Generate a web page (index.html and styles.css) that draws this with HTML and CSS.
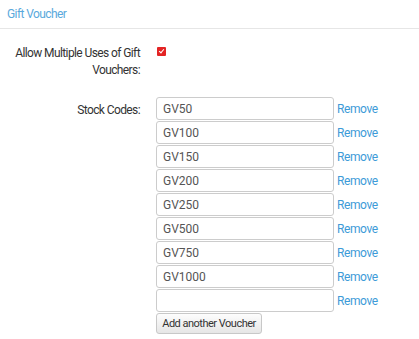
FILE: index.html
```html
<!DOCTYPE html>
<html lang="en">
  <head>
    <meta charset="UTF-8" />
    <title>Gift Voucher</title>
    <link rel="stylesheet" href="styles.css">
  </head>
  <body>
    <div class="panel-title">Gift Voucher</div>

    <form class="settings">
      <div class="form-row">
        <label class="form-label" for="multi">Allow Multiple Uses of Gift Vouchers:</label>
        <div class="form-control">
          <input type="checkbox" id="multi" class="check" checked />
        </div>
      </div>

      <div class="form-row">
        <label class="form-label stock-label">Stock Codes:</label>
        <div class="form-control">
          <div class="code-row"><input class="code" type="text" value="GV50" /><a href="#" class="remove">Remove</a></div>
          <div class="code-row"><input class="code" type="text" value="GV100" /><a href="#" class="remove">Remove</a></div>
          <div class="code-row"><input class="code" type="text" value="GV150" /><a href="#" class="remove">Remove</a></div>
          <div class="code-row"><input class="code" type="text" value="GV200" /><a href="#" class="remove">Remove</a></div>
          <div class="code-row"><input class="code" type="text" value="GV250" /><a href="#" class="remove">Remove</a></div>
          <div class="code-row"><input class="code" type="text" value="GV500" /><a href="#" class="remove">Remove</a></div>
          <div class="code-row"><input class="code" type="text" value="GV750" /><a href="#" class="remove">Remove</a></div>
          <div class="code-row"><input class="code" type="text" value="GV1000" /><a href="#" class="remove">Remove</a></div>
          <div class="code-row"><input class="code" type="text" value="" /><a href="#" class="remove">Remove</a></div>
          <button type="button" class="add-btn">Add another Voucher</button>
        </div>
      </div>
    </form>
  </body>
</html>
```

FILE: styles.css
```css
body {
  margin: 0;
  font-family: Roboto, "Liberation Sans", Arial, sans-serif;
  font-size: 12px;
  letter-spacing: -0.6px;
  color: #333;
  background: #fff;
}

.panel-title {
  height: 29px;
  box-sizing: border-box;
  padding: 6px 7px 0;
  line-height: 17px;
  color: #5aa9dc;
  border-bottom: 1px solid #e6e6e6;
}

.settings {
  padding-top: 16px;
}

.form-row {
  display: flex;
  gap: 16px;
  margin-bottom: 18px;
}

.form-label {
  width: 130px;
  margin-left: 10px;
  text-align: right;
  line-height: 17px;
  color: #333;
}

.stock-label {
  padding-top: 5px;
}

.check {
  margin: 1px 0 0 1px;
  width: 9px;
  height: 9px;
  appearance: none;
  background: #e32424;
  border-radius: 1px;
  position: relative;
}

.check:checked::after {
  content: "";
  position: absolute;
  left: 3px;
  top: 1px;
  width: 2px;
  height: 4px;
  border: solid #fff;
  border-width: 0 1.5px 1.5px 0;
  transform: rotate(40deg);
}

.code-row {
  display: flex;
  align-items: center;
  margin-bottom: 1px;
}

.code {
  width: 178px;
  height: 23px;
  box-sizing: border-box;
  border: 1px solid #ccc;
  border-radius: 3px;
  padding: 0 6px;
  font-family: inherit;
  font-size: 12px;
  letter-spacing: 0;
  color: #555;
  margin: 0;
}

.remove {
  margin-left: 3px;
  color: #3d9bd8;
  text-decoration: none;
  letter-spacing: -0.4px;
}

.add-btn {
  width: 106px;
  height: 21px;
  padding: 0;
  border: 1px solid #c8c8c8;
  border-radius: 3px;
  background: linear-gradient(#fdfdfd, #e6e6e6);
  font-family: inherit;
  font-size: 11px;
  letter-spacing: -0.5px;
  color: #333;
}
```
